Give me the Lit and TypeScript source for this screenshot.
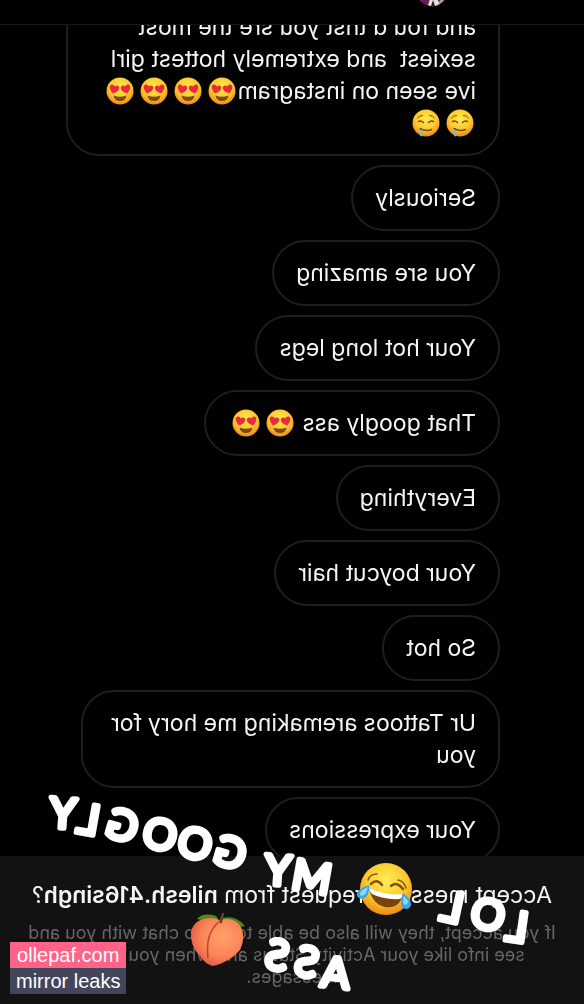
import { LitElement, html, css, svg } from "lit";
import { customElement, property } from "lit/decorators.js";

type Face = "love" | "drool";
type Part = string | Face[];

const MESSAGES: Part[][] = [
  [
    "and fou d tnst you sre the most sexiest  and extremely hottest girl ive seen on instagram",
    ["love", "love", "love", "love", "drool", "drool"],
  ],
  ["Seriously"],
  ["You sre amazing"],
  ["Your hot long legs"],
  ["That googly ass ", ["love", "love"]],
  ["Everything"],
  ["Your boycut hair"],
  ["So hot"],
  ["Ur Tattoos aremaking me hory for \nyou"],
  ["Your expressions"],
];

@customElement("face-icon")
class FaceIcon extends LitElement {
  @property() kind: Face = "love";

  static styles = css`
    :host {
      display: inline-block;
      width: 34px;
      height: 28px;
      vertical-align: middle;
      margin-top: -4px;
    }
    svg {
      display: block;
      width: 28px;
      height: 28px;
      margin-left: 2px;
    }
  `;

  render() {
    const heart = "M0 4.8C-2.6 3-4.6 1.2-4.6-1.2C-4.6-3.6-1.4-4.4 0-2C1.4-4.4 4.6-3.6 4.6-1.2C4.6 1.2 2.6 3 0 4.8Z";
    const features =
      this.kind === "love"
        ? svg`
            <path d="M7.5 18.5Q14 21 20.5 18.5Q19.5 24 14 24Q8.5 24 7.5 18.5Z" fill="#7c4a0a" />
            <path d=${heart} transform="translate(8.2 11.6) rotate(14) scale(1.05)" fill="#ea2a3c" />
            <path d=${heart} transform="translate(19.8 11.6) rotate(-14) scale(1.05)" fill="#ea2a3c" />`
        : svg`
            <g fill="none" stroke="#7c4a0a" stroke-linecap="round">
              <path d="M5.5 9Q7 6.5 10.5 6.5M17.5 6.5Q21 6.5 22.5 9" stroke-width="1" />
              <path d="M6.5 12.5Q9 11 11.5 13.5M16.5 13.5Q19 11 21.5 12.5" stroke-width="1.5" />
              <path d="M8.5 20.5Q14 23 20 19.5" stroke-width="1.5" />
            </g>
            <path d="M17.5 21.5L20.5 20.5Q19.5 23 20 27L18 27.5Q18.5 24 17.5 21.5Z" fill="#62c4e4" />`;
    return html`<svg viewBox="0 0 28 28" aria-hidden="true">
      <defs>
        <radialGradient id="skin" cx="50%" cy="35%" r="65%">
          <stop offset="0" stop-color="#ffe94d" />
          <stop offset="0.6" stop-color="#fdc92e" />
          <stop offset="1" stop-color="#ee8a12" />
        </radialGradient>
      </defs>
      <circle cx="14" cy="14" r="13.5" fill="url(#skin)" />
      ${features}
    </svg>`;
  }
}

@customElement("app-root")
class AppRoot extends LitElement {
  static styles = css`
    :host {
      display: block;
      position: relative;
      height: 100vh;
      overflow: hidden;
      background: #000;
      color: #f5f5f5;
      font-family: Inter, "Liberation Sans", sans-serif;
    }
    .stage {
      display: flex;
      flex-direction: column;
      height: 100%;
      transform: scaleX(-1);
    }
    .bar {
      display: flex;
      align-items: flex-end;
      flex: none;
      box-sizing: border-box;
      height: 25px;
      padding: 0 0 17px 134px;
      border-bottom: 1px solid #161616;
      overflow: hidden;
    }
    .avatar {
      flex: none;
      width: 36px;
      height: 36px;
    }
    .thread {
      flex: 1;
      min-height: 0;
      display: flex;
      flex-direction: column;
      justify-content: flex-end;
      align-items: flex-start;
      gap: 9px;
      overflow: hidden;
      padding-left: 84px;
      margin-bottom: -7px;
    }
    .bubble {
      flex: none;
      box-sizing: border-box;
      max-width: 434px;
      padding: 15px 22px;
      border: 2px solid #1e1e1e;
      border-radius: 33px;
      font-size: 23px;
      line-height: 32px;
      white-space: break-spaces;
    }
    .request {
      flex: none;
      position: relative;
      padding: 23px 24px 16px;
      background: #121212;
      text-align: center;
    }
    .title {
      margin: 0;
      font-size: 23px;
      line-height: 32px;
      font-weight: 400;
      white-space: nowrap;
    }
    .title b {
      font-weight: 600;
    }
    .note {
      margin: 11px 0 0;
      font-size: 18px;
      line-height: 22px;
      color: #666;
    }
    .stickers {
      position: absolute;
      left: 0;
      bottom: 0;
      width: 100%;
      pointer-events: none;
    }
    .scrawl {
      font-family: Lato, sans-serif;
      font-size: 42px;
      fill: #fff;
      stroke: #fff;
      stroke-width: 5px;
      stroke-linejoin: round;
      text-anchor: middle;
    }
    .mark {
      position: absolute;
      left: 10px;
      bottom: 10px;
      display: grid;
      text-align: center;
      font: 20px/26px "Liberation Sans", Arial, sans-serif;
      color: #fff;
    }
    .site {
      background: #ff6388;
      padding: 0 6px;
    }
    .tag {
      background: #43465a;
      padding: 0 6px;
    }
  `;

  render() {
    return html`
      <div class="stage">
        <header class="bar">
          <svg class="avatar" viewBox="0 0 36 36" aria-hidden="true">
            <circle cx="18" cy="18" r="17" fill="#6b1a58" />
            <path d="M10 33L15 24L20 28L22 34Q17 37 10 33Z" fill="#e9dfe3" />
            <path d="M15 35L17 29L19 35Z" fill="#2a2030" />
            <path d="M6 30L9 27L12 34Z" fill="#93a79a" />
          </svg>
        </header>
        <main class="thread">
          ${MESSAGES.map(
            (parts) => html`<div class="bubble">${parts.map((p) =>
              typeof p === "string" ? p : p.map((k) => html`<face-icon kind=${k}></face-icon>`)
            )}</div>`
          )}
        </main>
        <section class="request">
          <h1 class="title">Accept message request from <b>nilesh.416singh</b>?</h1>
          <p class="note">
            If you accept, they will also be able to video chat with you and<br />see info like your
            Activity Status and when you've read<br />messages.
          </p>
        </section>
      </div>

      <svg class="stickers" viewBox="0 780 584 224">
        <defs>
          <radialGradient id="joy" cx="50%" cy="35%" r="65%">
            <stop offset="0" stop-color="#ffee58" />
            <stop offset="0.6" stop-color="#fdc92e" />
            <stop offset="1" stop-color="#ee8a12" />
          </radialGradient>
          <radialGradient id="peach" cx="60%" cy="40%" r="65%">
            <stop offset="0" stop-color="#ffa268" />
            <stop offset="0.6" stop-color="#fb8557" />
            <stop offset="1" stop-color="#e85a45" />
          </radialGradient>
        </defs>
        <g class="scrawl" transform="translate(584 0) scale(-1 1)">
          <text x="69 100 135" y="943 933 924" rotate="-8 -14 -12">LOL</text>
          <text x="275 307" y="895 886" rotate="-10 -4">MY</text>
          <text x="358 393 428 466 498 522" y="871 862 853 844 836 829" rotate="-16 -14 -14 -16 -10 -4">GOOGLY</text>
          <text x="250 281 310" y="989 979 972" rotate="-6 -14 -12">ASS</text>
        </g>
        <g transform="translate(386 889)">
          <circle r="26" fill="url(#joy)" />
          <g fill="none" stroke="#85510d" stroke-linecap="round">
            <path d="M-18-9Q-16-15-9-15M12-9Q18-8 20-1" stroke-width="1.5" />
            <path d="M-15-5Q-9-11-4-4M5-3Q11-8 17 0" stroke-width="2.5" />
          </g>
          <path d="M-17-1Q0 9 17 6Q13 20-1 18Q-14 15-17-1Z" fill="#7a430b" />
          <path d="M-17-1Q0 7 16 5Q17 9 14 10Q-2 11-14 5Q-17 2-17-1Z" fill="#fff" />
          <path d="M-17-4Q-31 1-29 7Q-26 12-20 8Q-16 4-17-4Z" fill="#37a8e6" />
          <path d="M-18-2Q-27 2-26 6Q-23 8-20 4Z" fill="#8fd8fa" />
          <path d="M17 4Q13 16 17 19Q23 22 25 16Q26 11 17 4Z" fill="#37a8e6" />
          <path d="M18 7Q16 14 19 16Q22 15 22 12Z" fill="#8fd8fa" />
        </g>
        <g>
          <path d="M197 919Q203 912 216 916L219 920Q206 922 197 919Z" fill="#4b8b1d" />
          <path d="M222 918Q236 915 245 926Q233 929 222 918Z" fill="#4b8b1d" />
          <path
            d="M219 920Q234 916 241 927Q246 937 240 950Q230 962 213 966Q205 964 200 956Q190 946 191 932Q194 919 209 918Q215 918 219 920Z"
            fill="url(#peach)"
          />
          <path d="M220 921Q205 932 208 958" fill="none" stroke="#b9442c" stroke-width="1.5" />
          <path d="M223 914Q221 918 221 922" fill="none" stroke="#6b4020" stroke-width="2.5" stroke-linecap="round" />
        </g>
      </svg>

      <div class="mark"><span class="site">ollepaf.com</span><span class="tag">mirror leaks</span></div>
    `;
  }
}
